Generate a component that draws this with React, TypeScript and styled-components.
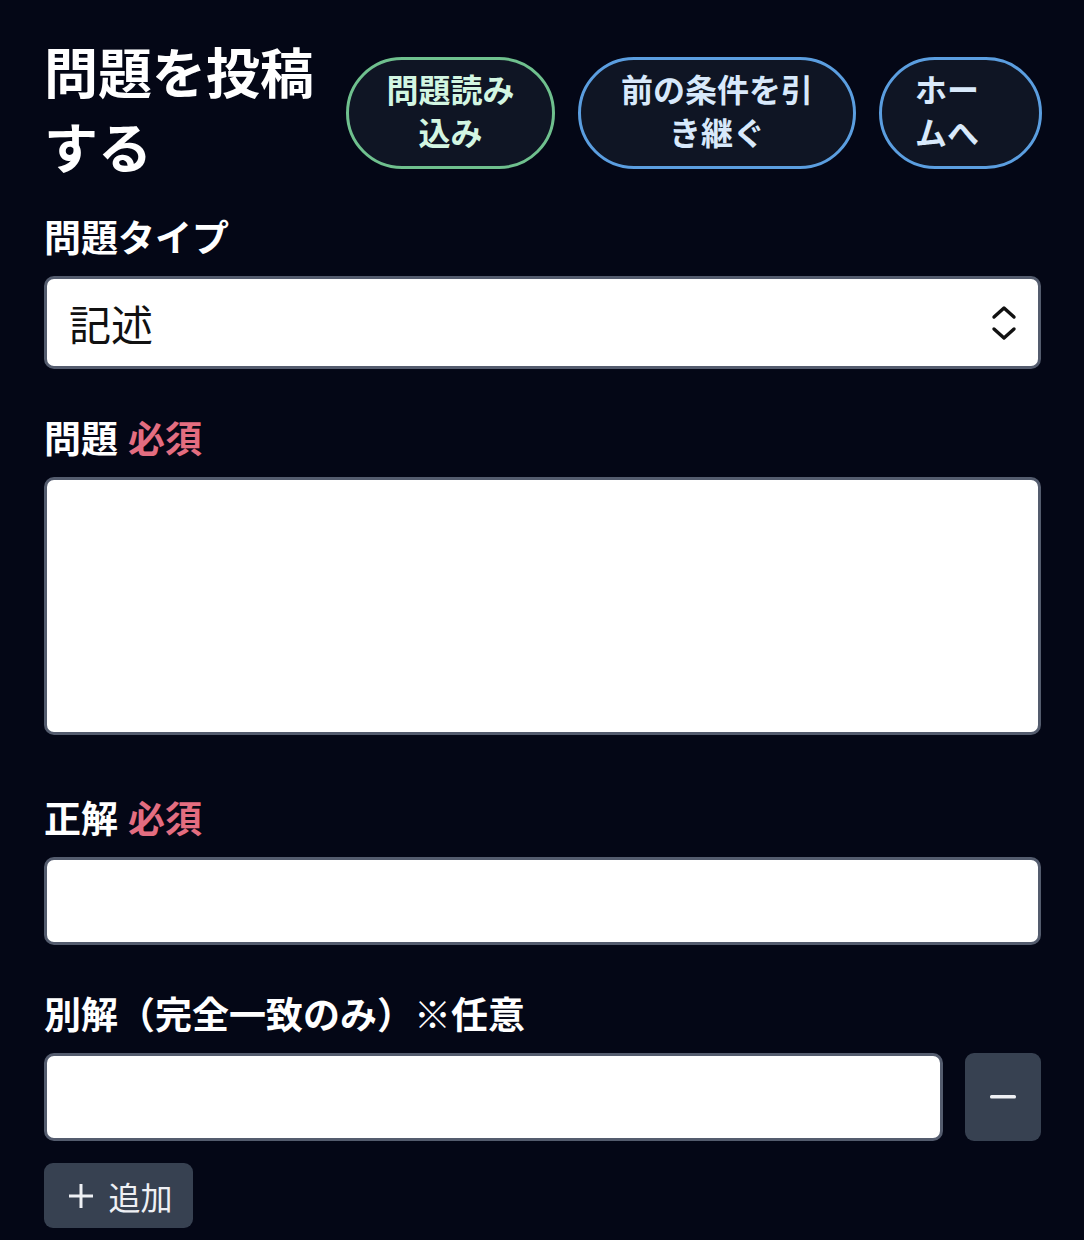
import React from "react"
import styled, { createGlobalStyle, css } from "styled-components"

const GlobalStyle = createGlobalStyle`
  html, body {
    margin: 0;
    padding: 0;
    background: #040716;
  }
  body {
    font-family: "Noto Sans CJK JP", "Noto Sans", sans-serif;
    color: #ffffff;
  }
  * { box-sizing: border-box; }
`

const Page = styled.div`
  min-height: 1240px;
  background: #040716;
  padding: 33px 43px 0 44px;
`

const Header = styled.div`
  display: flex;
  align-items: flex-start;
  gap: 23px;
  margin-bottom: 28px;
`

const Title = styled.h1`
  margin: 0;
  width: 279px;
  flex-shrink: 0;
  font-size: 54px;
  line-height: 75px;
  font-weight: 700;
  color: #ffffff;
`

const ActionButton = styled.button<{ $tone: "green" | "blue"; $w: number; $pl: number; $pr: number }>`
  width: ${p => p.$w}px;
  height: 112px;
  margin-top: 24px;
  flex-shrink: 0;
  padding: 0 ${p => p.$pr}px 6px ${p => p.$pl}px;
  border-radius: 56px;
  background: #0f1524;
  font-family: inherit;
  font-size: 32px;
  font-weight: 700;
  line-height: 43px;
  text-align: center;
  ${p =>
    p.$tone === "green"
      ? css`
          border: 3px solid #6fc08e;
          color: #d3f6e2;
        `
      : css`
          border: 3px solid #5b9ee0;
          color: #d8e9fb;
        `}
`

const Field = styled.div<{ $gap?: number }>`
  margin-bottom: ${p => p.$gap ?? 44}px;
`

const Label = styled.div`
  font-size: 37px;
  line-height: 50px;
  font-weight: 700;
  color: #ffffff;
  margin-bottom: 15px;
`

const Required = styled.span`
  color: #e36d80;
  margin-left: 10px;
`

const SelectBox = styled.div`
  height: 93px;
  background: #ffffff;
  border: 3px solid #545c6e;
  border-radius: 10px;
  display: flex;
  align-items: center;
  padding: 0 20px 0 22px;
  font-size: 42px;
  color: #111111;
`

const SelectValue = styled.span`
  flex: 1;
`

const TextArea = styled.div`
  height: 258px;
  background: #ffffff;
  border: 3px solid #545c6e;
  border-radius: 10px;
`

const Input = styled.div`
  flex: 1;
  height: 88px;
  background: #ffffff;
  border: 3px solid #545c6e;
  border-radius: 10px;
`

const Row = styled.div`
  display: flex;
  gap: 22px;
`

const GrayButton = styled.button<{ $w: number; $h: number }>`
  width: ${p => p.$w}px;
  height: ${p => p.$h}px;
  flex-shrink: 0;
  border: none;
  border-radius: 9px;
  background: #374151;
  color: #eef0f4;
  font-family: inherit;
  font-size: 32px;
  display: flex;
  align-items: center;
  justify-content: center;
  gap: 14px;
  padding: 0;
`

const AddButton = styled(GrayButton)`
  margin-top: 22px;
  padding-left: 4px;
`

function Chevrons() {
  return (
    <svg width="28" height="38" viewBox="0 0 28 38" fill="none" stroke="#111" strokeWidth="3.4" strokeLinecap="round" strokeLinejoin="round">
      <path d="M4 13 L14 4 L24 13" />
      <path d="M4 25 L14 34 L24 25" />
    </svg>
  )
}

function Minus() {
  return (
    <svg width="26" height="4" viewBox="0 0 26 4">
      <rect x="0" y="0" width="26" height="3.5" rx="1.5" fill="#eef0f4" />
    </svg>
  )
}

function Plus() {
  return (
    <svg width="26" height="26" viewBox="0 0 26 26" stroke="#eef0f4" strokeWidth="3">
      <path d="M13 1 V25 M1 13 H25" />
    </svg>
  )
}

export default function App() {
  return (
    <>
      <GlobalStyle />
      <Page>
        <Header>
          <Title>問題を投稿する</Title>
          <ActionButton $tone="green" $w={209} $pl={34} $pr={34}>問題読み込み</ActionButton>
          <ActionButton $tone="blue" $w={278} $pl={36} $pr={36}>前の条件を引き継ぐ</ActionButton>
          <ActionButton $tone="blue" $w={163} $pl={31} $pr={58}>ホームへ</ActionButton>
        </Header>

        <Field $gap={43}>
          <Label>問題タイプ</Label>
          <SelectBox>
            <SelectValue>記述</SelectValue>
            <Chevrons />
          </SelectBox>
        </Field>

        <Field $gap={57}>
          <Label>
            問題<Required>必須</Required>
          </Label>
          <TextArea />
        </Field>

        <Field $gap={43}>
          <Label>
            正解<Required>必須</Required>
          </Label>
          <Row>
            <Input />
          </Row>
        </Field>

        <Field $gap={0}>
          <Label>別解（完全一致のみ）※任意</Label>
          <Row>
            <Input />
            <GrayButton $w={76} $h={88}>
              <Minus />
            </GrayButton>
          </Row>
          <AddButton $w={149} $h={65}>
            <Plus />
            <span>追加</span>
          </AddButton>
        </Field>
      </Page>
    </>
  )
}
